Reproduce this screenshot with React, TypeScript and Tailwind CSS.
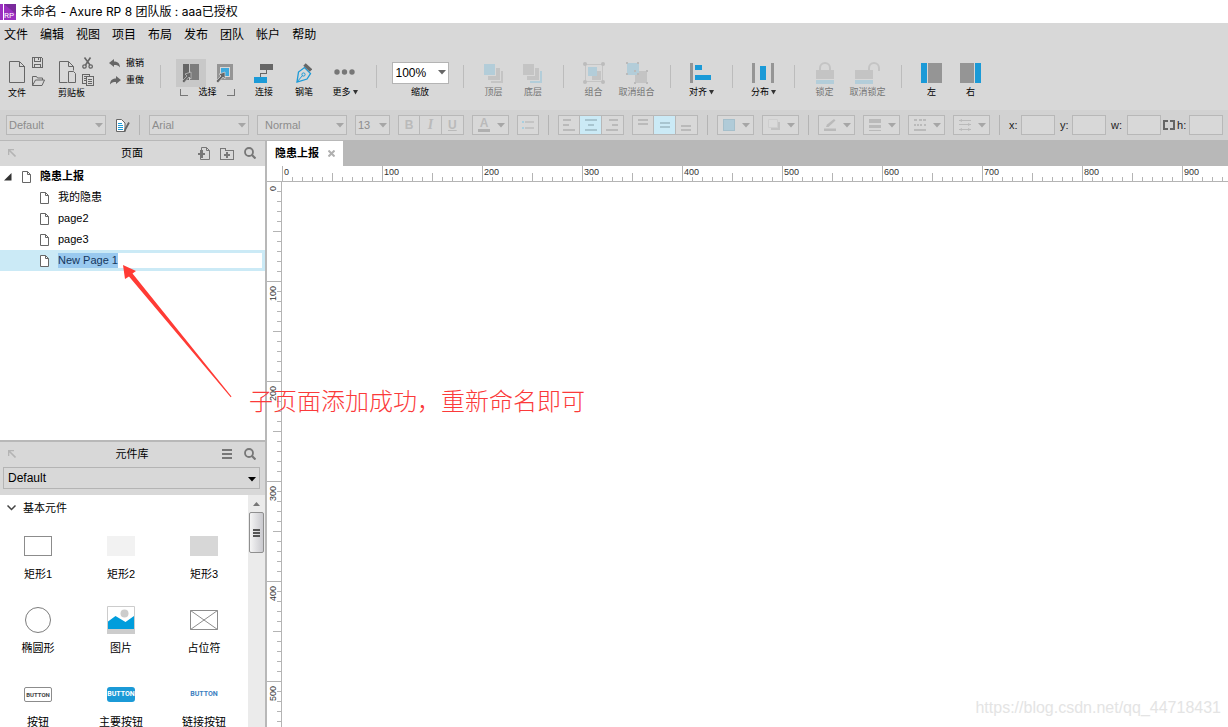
import { useEffect, useRef } from "react";
import type { ReactNode } from "react";

const menus = ["文件", "编辑", "视图", "项目", "布局", "发布", "团队", "帐户", "帮助"];
const subPages = ["我的隐患", "page2", "page3"];

const BLUE = "#1b9ad7";
const DARK = "#666666";
const MID = "#959595";
const PALE = "#c4c4c4";
const PALE_BLUE = "#b3cdd9";
const FORMAT = "#bababa";

type DrawProps = { w: number; h: number; children: ReactNode; smooth?: boolean };

function Draw({ w, h, children, smooth }: DrawProps) {
  return (
    <svg
      width={w}
      height={h}
      viewBox={`0 0 ${w} ${h}`}
      fill="none"
      shapeRendering={smooth ? "auto" : "crispEdges"}
      className="shrink-0"
      aria-hidden="true"
    >
      {children}
    </svg>
  );
}

function Caret({ color = "#a6a6a6", w = 8 }: { color?: string; w?: number }) {
  return (
    <Draw w={w} h={5} smooth>
      <path d={`M0 0h${w}L${w / 2} 4.5z`} fill={color} />
    </Draw>
  );
}

function ToolSeparator() {
  return <div className="mx-2.5 mt-[7px] h-[23px] w-px shrink-0 bg-[#bcbcbc]" />;
}

function FormatSeparator() {
  return <div className="mx-px h-5 w-px shrink-0 bg-[#b4b4b4]" />;
}

type ToolProps = {
  label: string;
  width: string;
  children: ReactNode;
  disabled?: boolean;
  menu?: boolean;
};

function Tool({ label, width, children, disabled, menu }: ToolProps) {
  return (
    <button type="button" disabled={disabled} className={`shrink-0 ${width}`}>
      <span className="flex h-[29px] items-center justify-center">{children}</span>
      <span
        className={`flex items-center justify-center gap-0.5 text-[9px] leading-[10px] whitespace-nowrap ${
          disabled ? "text-[#757575]" : "text-black"
        }`}
      >
        {label}
        {menu && <Caret color="#333333" w={5} />}
      </span>
    </button>
  );
}

function Toolbar() {
  return (
    <div className="flex h-[63px] items-start bg-[#d8d8d8] pt-[11px] pl-2">
      {/* file */}
      <div className="mr-[13px] shrink-0">
        <div className="flex h-[29px] items-center gap-[7px] pb-0.5 pl-px">
          <button type="button" aria-label="新建">
            <Draw w={16} h={24}>
              <path d="M.5 1.5h10l5 5v16H.5z" stroke={DARK} shapeRendering="auto" />
              <path d="M10.5 1.5v5h5" stroke={DARK} />
            </Draw>
          </button>
          <div className="flex flex-col gap-[7px]">
            <button type="button" aria-label="保存">
              <Draw w={13} h={11}>
                <path d="M.5 .5h9l1 1v9H.5zM2.5 .5v4h6v-4M2.5 10.5v-3h6v3" stroke={DARK} />
                <path d="M6 1h1v2H6z" fill={DARK} />
              </Draw>
            </button>
            <button type="button" aria-label="打开">
              <Draw w={13} h={11} smooth>
                <path d="M.5 10.5v-9h4l1 1.5h5v2M.5 10.5l3-5.5h9l-2.5 5.5z" stroke={DARK} />
              </Draw>
            </button>
          </div>
        </div>
        <div className="text-[9px] leading-3">文件</div>
      </div>

      {/* clipboard */}
      <div className="mr-[14px] shrink-0">
        <div className="flex h-[29px] items-center gap-[5px] pb-0.5 pl-px">
          <button type="button" aria-label="剪贴板">
            <Draw w={18} h={24}>
              <path d="M8.5 22.5h-8v-21h9l5 5v4M9.5 1.5v5h5" stroke={DARK} shapeRendering="auto" />
              <path d="M9.5 11.5h5l2 2v9h-7z" stroke={DARK} shapeRendering="auto" />
            </Draw>
          </button>
          <div className="flex flex-col gap-[5px]">
            <button type="button" aria-label="剪切">
              <Draw w={13} h={12} smooth>
                <path d="M2.5 .5L8 8M8.5 .5L3.5 8" stroke={DARK} strokeWidth="1.6" />
                <circle cx="2.5" cy="9.5" r="1.7" stroke={DARK} strokeWidth="1.3" />
                <circle cx="8.7" cy="9.5" r="1.7" stroke={DARK} strokeWidth="1.3" />
              </Draw>
            </button>
            <button type="button" aria-label="粘贴">
              <Draw w={13} h={12}>
                <path d="M4.5 9.5h-4v-9h7v2M2 2.5h3M2 4.5h2M2 6.5h2" stroke={DARK} />
                <path d="M4.5 2.5h7v9h-7zM6 5.5h4M6 7.5h4M6 9.5h4" stroke={DARK} />
              </Draw>
            </button>
          </div>
        </div>
        <div className="text-[9px] leading-3">剪贴板</div>
      </div>

      {/* undo / redo */}
      <div className="flex h-[29px] w-[41px] shrink-0 flex-col justify-center gap-[5px] pb-0.5">
        <button type="button" className="flex h-3 items-center gap-[5px] text-[9px] leading-3 whitespace-nowrap">
          <Draw w={12} h={9} smooth>
            <path d="M0 4l5-4v2.5c3 0 6 1.5 6 6-1.5-2-3-2.500-6-2.500v2z" fill={DARK} />
          </Draw>
          撤销
        </button>
        <button type="button" className="flex h-3 items-center gap-[5px] text-[9px] leading-3 whitespace-nowrap">
          <Draw w={12} h={9} smooth>
            <path d="M12 4L7 0v2.5c-3 0-6 1.5-6 6 1.5-2 3-2.500 6-2.500v2z" fill={DARK} />
          </Draw>
          重做
        </button>
      </div>
      <ToolSeparator />

      {/* selection mode */}
      <div className="w-[73px] shrink-0">
        <div className="flex h-[29px] items-center justify-center gap-1">
          <button
            type="button"
            aria-label="相交选中"
            className="flex h-7 w-[30px] items-center justify-center bg-[#c8c8c8]"
          >
            <Draw w={18} h={20}>
              <path d="M1 1h6v16H1z" fill={DARK} />
              <path d="M8 1h9v16H8z" fill="#7c7c7c" />
              <path d="M9 9v7l-2-2-5 6-2-2 5-5-2-2z" fill={DARK} stroke="#c8c8c8" strokeWidth=".7" shapeRendering="auto" />
            </Draw>
          </button>
          <button type="button" aria-label="包含选中" className="flex h-7 w-[30px] items-center justify-center">
            <Draw w={18} h={20}>
              <path d="M2.5 2.5h13v13h-13z" stroke={MID} strokeWidth="3" />
              <path d="M5 5h8v8H5z" fill="#3ea9dd" />
              <path d="M9 9v7l-2-2-5 6-2-2 5-5-2-2z" fill={DARK} stroke="#d8d8d8" strokeWidth=".7" shapeRendering="auto" />
            </Draw>
          </button>
        </div>
        <div className="flex h-2.5 items-center justify-center gap-2.5 text-[9px] leading-[10px]">
          <Draw w={8} h={7}>
            <path d="M.5 0v6.5H8" stroke="#777777" />
          </Draw>
          选择
          <Draw w={8} h={7}>
            <path d="M7.5 0v6.5H0" stroke="#777777" />
          </Draw>
        </div>
      </div>
      <Tool label="连接" width="w-10">
        <Draw w={20} h={20}>
          <path d="M6 1h13v6H6z" fill={DARK} />
          <path d="M12.5 7v3.5h-6V14" stroke={DARK} />
          <path d="M0 14h13v6H0z" fill={BLUE} />
        </Draw>
      </Tool>
      <Tool label="钢笔" width="w-10">
        <Draw w={16} h={20} smooth>
          <path d="M1 19l1.5-10 6-4.5 6 6L11 16z" stroke={BLUE} strokeWidth="1.3" />
          <path d="M1 19l5.5-6.5" stroke={BLUE} />
          <circle cx="7.5" cy="11.5" r="1.6" stroke={BLUE} />
          <path d="M8.5 1.5l6.5 6" stroke={DARK} strokeWidth="3.5" />
        </Draw>
      </Tool>
      <Tool label="更多" width="w-[42px]" menu>
        <Draw w={22} h={8} smooth>
          <circle cx="3" cy="3" r="2.7" fill="#777777" />
          <circle cx="10.5" cy="3" r="2.7" fill="#777777" />
          <circle cx="18" cy="3" r="2.7" fill="#777777" />
        </Draw>
      </Tool>
      <ToolSeparator />

      <div className="flex w-[66px] shrink-0 flex-col items-center">
        <div className="flex h-[29px] items-center">
          <div className="relative">
            <select
              id="zoom"
              className="block h-[22px] w-[57px] appearance-none border border-[#b4b4b4] bg-white pl-[3px] text-xs text-black"
            >
              <option>100%</option>
            </select>
            <span className="pointer-events-none absolute inset-y-0 right-[3px] flex items-center">
              <Caret color={DARK} />
            </span>
          </div>
        </div>
        <label htmlFor="zoom" className="text-[9px] leading-[10px]">
          缩放
        </label>
      </div>
      <ToolSeparator />

      <Tool label="顶层" width="w-[39px]" disabled>
        <Draw w={22} h={20}>
          <path d="M8 8h12v12H8z" fill={PALE} />
          <path d="M4 4h13v13H4z" fill={PALE} stroke="#d8d8d8" />
          <path d="M0 0h12v12H0z" fill={PALE_BLUE} stroke="#d8d8d8" />
        </Draw>
      </Tool>
      <Tool label="底层" width="w-10" disabled>
        <Draw w={22} h={20}>
          <path d="M8 8h12v12H8z" fill={PALE_BLUE} />
          <path d="M4 4h13v13H4z" fill={PALE} stroke="#d8d8d8" />
          <path d="M0 0h12v12H0z" fill={PALE} stroke="#d8d8d8" />
        </Draw>
      </Tool>
      <ToolSeparator />

      <Tool label="组合" width="w-[39px]" disabled>
        <Draw w={22} h={22}>
          <path d="M2.5 2.5h17v17h-17z" stroke={PALE} />
          <path d="M9 9h9v9H9z" fill={PALE} />
          <path d="M5 5h9v9H5z" fill={PALE_BLUE} />
          {[2, 20].map((x) =>
            [2, 20].map((y) => (
              <circle key={`${x}-${y}`} cx={x} cy={y} r="2" fill="#bcbcbc" shapeRendering="auto" />
            )),
          )}
        </Draw>
      </Tool>
      <Tool label="取消组合" width="w-[47px]" disabled>
        <Draw w={22} h={22}>
          <path d="M9 9h12v12H9z" fill={PALE} />
          <path d="M1 1h12v12H1z" fill={PALE_BLUE} />
          <path d="M0 0h2v2H0zM11 0h2v2h-2zM0 11h2v2H0zM11 11h2v2h-2zM20 8h2v2h-2zM8 20h2v2H8zM20 20h2v2h-2zM8 8h2v2H8z" fill="#bababa" />
        </Draw>
      </Tool>
      <ToolSeparator />

      <Tool label="对齐" width="w-[41px]" menu>
        <Draw w={23} h={22}>
          <path d="M0 1h3v20H0z" fill={MID} />
          <path d="M5 3h7v5H5zM5 13h16v5H5z" fill={BLUE} />
        </Draw>
      </Tool>
      <ToolSeparator />
      <Tool label="分布" width="w-[41px]" menu>
        <Draw w={23} h={22}>
          <path d="M0 1h3v20H0zM19 1h3v20h-3z" fill={MID} />
          <path d="M8 4h6v14H8z" fill={BLUE} />
        </Draw>
      </Tool>
      <ToolSeparator />

      <Tool label="锁定" width="w-[39px]" disabled>
        <Draw w={18} h={22}>
          <path d="M4 9V6a5 5 0 0110 0v3" stroke={PALE} strokeWidth="2" shapeRendering="auto" />
          <path d="M0 8h18v9H0z" fill={PALE} />
          <path d="M0 18h18v4H0z" fill={PALE_BLUE} />
        </Draw>
      </Tool>
      <Tool label="取消锁定" width="w-[47px]" disabled>
        <Draw w={25} h={22}>
          <path d="M14 9V6a5 5 0 0110 0v3" stroke={PALE} strokeWidth="2" shapeRendering="auto" />
          <path d="M0 8h18v9H0z" fill={PALE} />
          <path d="M0 18h18v4H0z" fill={PALE_BLUE} />
        </Draw>
      </Tool>
      <ToolSeparator />

      <Tool label="左" width="w-[39px]">
        <Draw w={21} h={20}>
          <path d="M0 0h6v20H0z" fill={BLUE} />
          <path d="M7 0h14v20H7z" fill={MID} />
        </Draw>
      </Tool>
      <Tool label="右" width="w-[39px]">
        <Draw w={21} h={20}>
          <path d="M0 0h14v20H0z" fill={MID} />
          <path d="M15 0h6v20h-6z" fill={BLUE} />
        </Draw>
      </Tool>
    </div>
  );
}

function FormatSelect({ label, value, className }: { label: string; value: string; className: string }) {
  return (
    <div className="relative shrink-0">
      <select
        aria-label={label}
        disabled
        className={`block h-5 appearance-none border border-[#b8b8b8] bg-[#d8d8d8] text-[11px] text-[#8c8c8c] opacity-100 ${className}`}
      >
        <option>{value}</option>
      </select>
      <span className="pointer-events-none absolute top-2 right-[3px]">
        <Caret />
      </span>
    </div>
  );
}

function FormatMenu({ label, children }: { label: string; children: ReactNode }) {
  return (
    <button
      type="button"
      disabled
      aria-label={label}
      className="flex h-5 w-[37px] shrink-0 items-center justify-between border border-[#b8b8b8] bg-[#d8d8d8] pr-[3px] pl-[5px]"
    >
      {children}
      <Caret />
    </button>
  );
}

function Segment({ active, label, children }: { active?: boolean; label: string; children: ReactNode }) {
  return (
    <button
      type="button"
      disabled
      aria-label={label}
      className={`flex w-[22px] items-center justify-center border-r border-[#b8b8b8] last:border-r-0 ${
        active ? "bg-[#cbeaf6]" : ""
      }`}
    >
      {children}
    </button>
  );
}

function Segments({ children }: { children: ReactNode }) {
  return <div className="flex h-5 w-[66px] shrink-0 border border-[#b8b8b8] bg-[#d8d8d8]">{children}</div>;
}

function Field({ name, width = "w-3" }: { name: string; width?: string }) {
  return (
    <label className="flex shrink-0 items-center text-[11px] text-[#222222]">
      <span className={width}>{name}:</span>
      <input type="text" className="h-5 w-[34px] border border-[#b8b8b8] bg-[#d8d8d8] px-1" />
    </label>
  );
}

function FormatBar() {
  return (
    <div className="flex h-[30px] items-center gap-2 bg-[#d2d2d2] pl-1.5">
      <FormatSelect label="样式" value="Default" className="w-[100px] pl-0.5" />
      <button type="button" aria-label="管理样式" className="w-4 shrink-0 pl-0.5">
        <Draw w={14} h={13} smooth>
          <path d="M.5 .5h5l3.5 3.500v8.500h-8.500z" fill="#ffffff" stroke={DARK} />
          <path d="M2 4h4v1H2zM2 6h5v1H2zM2 8h5v1H2zM2 10h5v1H2z" fill={BLUE} />
          <path d="M13 3.500L9.500 10 8.500 12.500" stroke={DARK} strokeWidth="1.800" />
        </Draw>
      </button>
      <FormatSeparator />
      <FormatSelect label="字体" value="Arial" className="w-[100px] pl-0.5" />
      <FormatSelect label="字型" value="Normal" className="w-[90px] pl-[7px]" />
      <FormatSelect label="字号" value="13" className="w-[35px] pl-0.5" />
      <Segments>
        <Segment label="粗体">
          <span className="text-xs font-bold text-[#bababa]">B</span>
        </Segment>
        <Segment label="斜体">
          <span className="font-['Liberation_Serif'] text-sm font-bold text-[#bababa] italic">I</span>
        </Segment>
        <Segment label="下划线">
          <span className="text-xs font-bold text-[#bababa] underline">U</span>
        </Segment>
      </Segments>
      <FormatMenu label="文字颜色">
        <span className="w-3 border-b-3 border-[#b0b0b0] text-center text-xs leading-[11px] font-bold text-[#bababa]">
          A
        </span>
      </FormatMenu>
      <button
        type="button"
        disabled
        aria-label="项目符号"
        className="flex h-5 w-[22px] shrink-0 items-center justify-center border border-[#b8b8b8] bg-[#d8d8d8]"
      >
        <Draw w={12} h={9}>
          <path d="M0 0h2v2H0zM0 6h2v2H0z" fill="#a9cfdf" />
          <path d="M3 0h9v2H3zM3 6h9v2H3z" fill={PALE} />
        </Draw>
      </button>
      <FormatSeparator />
      <Segments>
        <Segment label="左对齐">
          <Draw w={12} h={12}>
            <path d="M0 0h8v2H0zM0 5h6v2H0zM0 10h12v2H0z" fill={FORMAT} />
          </Draw>
        </Segment>
        <Segment label="居中" active>
          <Draw w={12} h={12}>
            <path d="M0 0h12v2H0zM3 5h6v2H3zM0 10h12v2H0z" fill="#a8c5d0" />
          </Draw>
        </Segment>
        <Segment label="右对齐">
          <Draw w={12} h={12}>
            <path d="M3 0h9v2H3zM6 5h6v2H6zM0 10h12v2H0z" fill={FORMAT} />
          </Draw>
        </Segment>
      </Segments>
      <Segments>
        <Segment label="顶部对齐">
          <Draw w={10} h={12}>
            <path d="M0 0h10v2H0zM0 4h10v2H0z" fill={FORMAT} />
          </Draw>
        </Segment>
        <Segment label="垂直居中" active>
          <Draw w={10} h={12}>
            <path d="M0 3h10v2H0zM0 7h10v2H0z" fill="#a8c5d0" />
          </Draw>
        </Segment>
        <Segment label="底部对齐">
          <Draw w={10} h={12}>
            <path d="M0 6h10v2H0zM0 10h10v2H0z" fill={FORMAT} />
          </Draw>
        </Segment>
      </Segments>
      <FormatSeparator />
      <FormatMenu label="填充颜色">
        <Draw w={12} h={12}>
          <path d="M.5 .5h11v11H.5z" fill="#b0cbd8" stroke="#a5bfcb" />
        </Draw>
      </FormatMenu>
      <FormatMenu label="外部阴影">
        <Draw w={13} h={12} smooth>
          <path d="M3 3h9v8H3z" fill="#c2c2c2" />
          <path d="M.5 .5h9v8h-9z" fill="#dadada" stroke="#cecece" />
        </Draw>
      </FormatMenu>
      <FormatSeparator />
      <FormatMenu label="线段颜色">
        <Draw w={13} h={12} smooth>
          <path d="M2 8l1-2.500L10 0l1.500 1.500L4.500 8z" fill={FORMAT} />
          <path d="M0 9.500h12V12H0z" fill={FORMAT} />
        </Draw>
      </FormatMenu>
      <FormatMenu label="线宽">
        <Draw w={13} h={12}>
          <path d="M0 0h12v4H0zM0 6h12v3H0zM0 11h12v1H0z" fill={FORMAT} />
        </Draw>
      </FormatMenu>
      <FormatMenu label="线段类型">
        <Draw w={13} h={12}>
          <path d="M0 0h3v2H0zM5 0h3v2H5zM9 0h3v2H9zM0 5h2v2H0zM3 5h2v2H3zM6 5h2v2H6zM10 5h2v2h-2zM0 10h12v2H0z" fill={FORMAT} />
        </Draw>
      </FormatMenu>
      <FormatMenu label="箭头样式">
        <Draw w={13} h={12} smooth>
          <path d="M0 1.500h12M0 5.500h12M0 10.500h12" stroke={FORMAT} />
          <path d="M0 1.500L3 0v3zM12 5.500L9 4v3zM0 10.500L3 9v3zM12 10.500L9 9v3z" fill={FORMAT} />
        </Draw>
      </FormatMenu>
      <FormatSeparator />
      <div className="flex items-center gap-[5px]">
        <Field name="x" />
        <Field name="y" />
        <div className="flex items-center gap-0.5">
          <Field name="w" width="w-4" />
          <button type="button" aria-label="保持宽高比例">
            <Draw w={12} h={10}>
              <path d="M5 1H1v8h4M7 1h4v8H7" stroke={DARK} strokeWidth="2" />
            </Draw>
          </button>
          <Field name="h" />
        </div>
      </div>
    </div>
  );
}

function PopOutIcon() {
  return (
    <Draw w={8} h={8} smooth>
      <path d="M.5 6V.5H6M1 1l6.500 6.500" stroke="#b4b4b4" strokeWidth="1.600" />
    </Draw>
  );
}

function SearchIcon() {
  return (
    <Draw w={12} h={12} smooth>
      <circle cx="5" cy="5" r="4" stroke="#777777" strokeWidth="1.800" />
      <path d="M8 8l3.500 3.500" stroke="#777777" strokeWidth="2.200" />
    </Draw>
  );
}

function PanelHeader({ title, children }: { title: string; children: ReactNode }) {
  return (
    <header className="grid h-[25px] shrink-0 grid-cols-[1fr_auto_1fr] items-center bg-[#d8d8d8] pr-[9px] pb-px pl-2">
      <button type="button" aria-label="弹出" className="justify-self-start">
        <PopOutIcon />
      </button>
      <h2 className="text-[11px] leading-4">{title}</h2>
      <div className="flex items-center gap-2.5 justify-self-end">{children}</div>
    </header>
  );
}

function PageIcon() {
  return (
    <Draw w={9} h={12} smooth>
      <path d="M.5 .5h5l3 3v8h-8z" fill="#ffffff" stroke={DARK} />
      <path d="M5.500 .5v3h3" stroke={DARK} />
    </Draw>
  );
}

function PagesPanel() {
  const nameInput = useRef<HTMLInputElement>(null);

  // a page that was just added opens in rename mode with its whole name selected
  useEffect(() => {
    nameInput.current?.focus();
    nameInput.current?.select();
  }, []);

  return (
    <section className="h-[299px] shrink-0">
      <PanelHeader title="页面">
        <button type="button" aria-label="添加页面">
          <Draw w={12} h={13}>
            <path d="M3.500 4V.5h5l3 3v9h-9V11M8.500 .5v3h3" stroke="#777777" shapeRendering="auto" />
            <path d="M0 7h7M3 4h1v6H3z" stroke="#777777" strokeWidth="2" />
          </Draw>
        </button>
        <button type="button" aria-label="添加文件夹">
          <Draw w={14} h={13}>
            <path d="M.5 12.500v-11h5v2h8v9z" stroke="#777777" />
            <path d="M4 8h6M7 5v6" stroke="#777777" strokeWidth="2" />
          </Draw>
        </button>
        <button type="button" aria-label="搜索页面">
          <SearchIcon />
        </button>
      </PanelHeader>
      <ul className="text-[11px] leading-[21px]">
        <li>
          <div className="flex h-[21px] items-center pl-1 font-bold">
            <Draw w={18} h={8} smooth>
              <path d="M0 7.500L7.500 0v7.500z" fill="#333333" />
            </Draw>
            <PageIcon />
            <span className="pl-[9px]">隐患上报</span>
          </div>
          <ul>
            {subPages.map((page) => (
              <li key={page} className="flex h-[21px] items-center gap-[9px] pl-10">
                <PageIcon />
                {page}
              </li>
            ))}
            <li className="flex h-[21px] items-center gap-[9px] bg-[#cbeaf6] pr-[3px] pl-10">
              <PageIcon />
              <input
                ref={nameInput}
                type="text"
                aria-label="页面名称"
                defaultValue="New Page 1"
                className="h-[15px] min-w-0 flex-1 bg-white leading-[15px] text-[#222222] outline-none selection:bg-[#99c9ef] selection:text-[#14365c]"
              />
            </li>
          </ul>
        </li>
      </ul>
    </section>
  );
}

const widgets: { name: string; icon: ReactNode }[] = [
  { name: "矩形1", icon: <span className="h-5 w-7 border border-[#8c8c8c]" /> },
  { name: "矩形2", icon: <span className="h-5 w-7 bg-[#f2f2f2]" /> },
  { name: "矩形3", icon: <span className="h-5 w-7 bg-[#d7d7d7]" /> },
  { name: "椭圆形", icon: <span className="size-[26px] rounded-full border border-[#7c7c7c]" /> },
  {
    name: "图片",
    icon: (
      <Draw w={28} h={28} smooth>
        <path d="M.5 .5h27v27H.5z" fill="#ffffff" stroke="#cccccc" />
        <circle cx="17.500" cy="7.500" r="4" fill="#cccccc" />
        <path d="M1 15.500L8.500 10l10 6L27 10v13H1z" fill="#009ddc" />
        <path d="M0 23h28v5H0z" fill="#cccccc" />
      </Draw>
    ),
  },
  {
    name: "占位符",
    icon: (
      <Draw w={28} h={20} smooth>
        <path d="M.5 .5h27v19H.5zM.5 .5l27 19M27.500 .5l-27 19" stroke="#8c8c8c" />
      </Draw>
    ),
  },
  {
    name: "按钮",
    icon: (
      <span className="flex h-[15px] w-7 items-center justify-center rounded-xs border border-[#8c8c8c] font-[Roboto] text-[6px] font-bold text-[#444444]">
        BUTTON
      </span>
    ),
  },
  {
    name: "主要按钮",
    icon: (
      <span className="flex h-[15px] w-7 items-center justify-center rounded-[3px] bg-[#1b9ad7] font-[Roboto] text-[7px] font-bold text-white">
        BUTTON
      </span>
    ),
  },
  {
    name: "链接按钮",
    icon: <span className="font-[Roboto] text-[7px] font-bold text-[#3d7fc1]">BUTTON</span>,
  },
];

function LibraryPanel() {
  return (
    <section className="flex min-h-0 flex-1 flex-col border-t-2 border-[#b8b8b8]">
      <PanelHeader title="元件库">
        <button type="button" aria-label="选项" className="mr-0.5">
          <Draw w={10} h={10}>
            <path d="M0 0h10v2H0zM0 4h10v2H0zM0 8h10v2H0z" fill="#777777" />
          </Draw>
        </button>
        <button type="button" aria-label="搜索元件">
          <SearchIcon />
        </button>
      </PanelHeader>
      <div className="relative h-7 shrink-0 bg-[#d8d8d8] pr-[5px] pl-[3px]">
        <select
          aria-label="元件库"
          className="block h-[22px] w-full appearance-none border border-[#b4b4b4] bg-[#d8d8d8] pl-1 text-xs text-black"
        >
          <option>Default</option>
        </select>
        <span className="pointer-events-none absolute top-2.5 right-[9px]">
          <Caret color="#000000" />
        </span>
      </div>
      <div className="flex min-h-0 flex-1">
        <div className="min-h-0 flex-1 overflow-hidden">
          <h3 className="flex h-[26px] items-center gap-[7px] pl-[7px] text-[11px]">
            <Draw w={9} h={6} smooth>
              <path d="M.5 .5l4 4 4-4" stroke="#444444" strokeWidth="1.500" />
            </Draw>
            基本元件
          </h3>
          <div className="grid grid-cols-[62px_62px_62px] gap-x-[21px] pl-[7px]">
            {widgets.map((w) => (
              <button key={w.name} type="button" className="flex h-[74px] flex-col items-center pt-[11px]">
                <span className="flex h-7 items-center">{w.icon}</span>
                <span className="pt-[7px] text-[11px] leading-[14px] whitespace-nowrap">{w.name}</span>
              </button>
            ))}
          </div>
        </div>
        <div className="w-[17px] shrink-0 bg-[#ebebeb] px-px">
          <div className="flex h-[17px] items-center justify-center">
            <Draw w={7} h={4} smooth>
              <path d="M0 4l3.500-4L7 4z" fill="#777777" />
            </Draw>
          </div>
          <div className="flex h-[41px] items-center justify-center rounded-xs border border-[#8f8f8f] bg-linear-to-r from-[#f5f5f5] to-[#c9c9ce]">
            <Draw w={7} h={8}>
              <path d="M0 0h7v2H0zM0 3h7v2H0zM0 6h7v2H0z" fill="#555555" />
            </Draw>
          </div>
        </div>
      </div>
    </section>
  );
}

function HorizontalRuler() {
  return (
    <div className="flex h-[15px] shrink-0 overflow-hidden bg-white pl-[15px]">
      {[0, 1, 2, 3, 4, 5, 6, 7, 8, 9].map((unit) => (
        <div key={unit} className="relative flex shrink-0 items-end">
          {[0, 1, 2, 3, 4, 5, 6, 7, 8, 9].map((tick) => (
            <div
              key={tick}
              className={`w-2.5 border-l border-[#b4b4b4] ${tick === 0 ? "h-[15px]" : tick === 5 ? "h-2" : "h-1"}`}
            />
          ))}
          <span className="absolute top-px left-0.5 text-[9px] leading-[11px] text-[#333333]">{unit * 100}</span>
        </div>
      ))}
    </div>
  );
}

function VerticalRuler() {
  return (
    <div className="w-[15px] shrink-0 overflow-hidden border-r border-[#b4b4b4] bg-white">
      {[0, 1, 2, 3, 4, 5].map((unit) => (
        <div key={unit} className="relative flex flex-col items-end">
          {[0, 1, 2, 3, 4, 5, 6, 7, 8, 9].map((tick) => (
            <div
              key={tick}
              className={`h-2.5 border-t border-[#b4b4b4] ${tick === 0 ? "w-[14px]" : tick === 5 ? "w-2" : "w-1"}`}
            />
          ))}
          <span className="absolute top-[5px] left-px rotate-180 text-[9px] leading-[11px] text-[#333333] [writing-mode:vertical-rl]">
            {unit * 100}
          </span>
        </div>
      ))}
    </div>
  );
}

export default function App() {
  return (
    <div className="relative flex h-screen flex-col overflow-hidden bg-white font-['Liberation_Sans','Noto_Sans_CJK_SC',sans-serif] text-black">
      <div className="flex h-[23px] shrink-0 items-center gap-[5px] bg-white">
        <Draw w={16} h={16} smooth>
          <path d="M0 0h16v16H0z" fill="#9b2fc0" />
          <path d="M4 0h12v10z" fill="#7a2a9c" />
          <path d="M3 0h1v16H3z" fill="#ffffff" />
          <text x="4" y="14" fill="#ffffff" fontSize="8" fontFamily="Roboto">
            RP
          </text>
        </Draw>
        <h1 className="font-[Inter,'Noto_Sans_CJK_SC',sans-serif] text-xs">
          未命名 - Axure RP 8 团队版 : aaa已授权
        </h1>
      </div>
      <nav className="flex h-6 shrink-0 items-center gap-3 bg-[#d8d8d8] pl-1 text-xs">
        {menus.map((menu) => (
          <button key={menu} type="button">
            {menu}
          </button>
        ))}
      </nav>
      <Toolbar />
      <FormatBar />

      <div className="flex min-h-0 flex-1 border-t border-[#b8b8b8]">
        <aside className="flex w-[267px] shrink-0 flex-col border-r-2 border-[#b8b8b8] bg-white">
          <PagesPanel />
          <LibraryPanel />
        </aside>
        <main className="flex min-w-0 flex-1 flex-col">
          <div className="flex h-[25px] shrink-0 bg-[#b8b8b8]">
            <div className="flex items-center gap-[9px] bg-white px-2 text-[11px] font-bold">
              隐患上报
              <button type="button" aria-label="关闭">
                <Draw w={7} h={7} smooth>
                  <path d="M.5 .5l6 6M6.500 .5l-6 6" stroke="#b0b0b0" strokeWidth="2" />
                </Draw>
              </button>
            </div>
          </div>
          <HorizontalRuler />
          <div className="flex min-h-0 flex-1">
            <VerticalRuler />
            <div className="flex-1 border-t border-[#b4b4b4] bg-white" />
          </div>
        </main>
      </div>

      <div className="pointer-events-none absolute top-[264px] left-[122px]">
        <Draw w={112} h={136} smooth>
          <path d="M1 1l13 6-3.500 2.500L109.500 132.500l-.8.700L7 12.500 3 15z" fill="#ff3b35" />
        </Draw>
      </div>
      <p className="pointer-events-none absolute top-[384px] left-[249px] text-2xl leading-9 font-light whitespace-nowrap text-[#fb3a3a]">
        子页面添加成功，重新命名即可
      </p>
      <p className="pointer-events-none absolute right-[7px] bottom-[7px] text-base whitespace-nowrap text-[#e4e4e4]">
        https://blog.csdn.net/qq_44718431
      </p>
    </div>
  );
}
